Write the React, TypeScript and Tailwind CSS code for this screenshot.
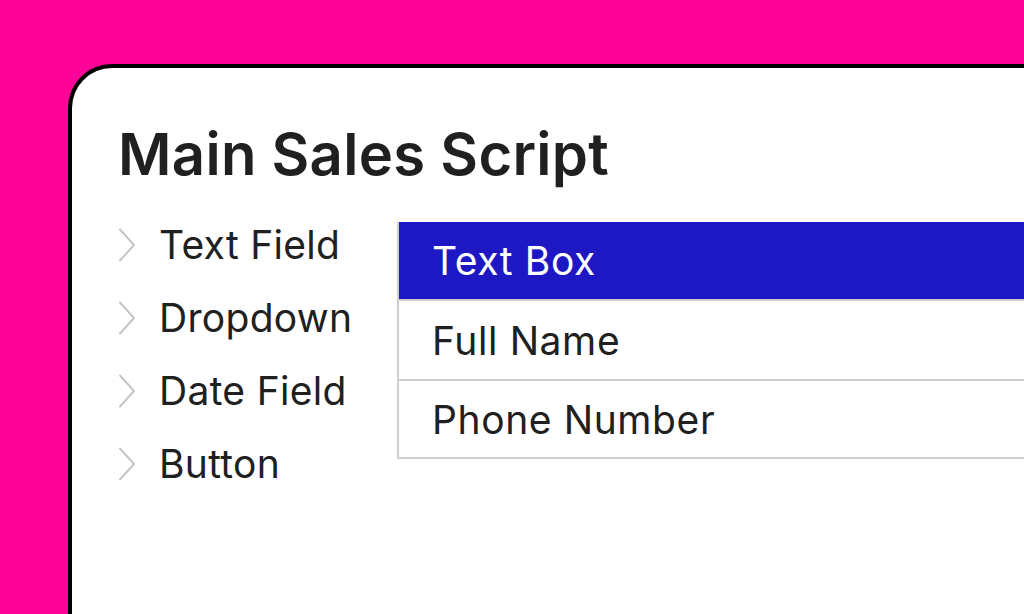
import React from "react";

const fields = ["Text Field", "Dropdown", "Date Field", "Button"];
const rows = ["Text Box", "Full Name", "Phone Number"];

const Chevron = () => (
  <svg width="18" height="34" viewBox="0 0 18 34" fill="none" className="shrink-0">
    <path d="M2 1.5 L16 17 L2 32.5" stroke="#c4c4c4" strokeWidth="1.9" strokeLinecap="round" strokeLinejoin="round" />
  </svg>
);

const App: React.FC = () => {
  return (
    <div
      className="w-[1024px] h-[614px] overflow-hidden bg-[#ff0399] pt-[64px] pl-[68px] flex"
      style={{ fontFamily: "Inter, 'Noto Sans', sans-serif" }}
    >
      {/* Window card, runs off the right and bottom */}
      <div className="flex-1 h-[600px] bg-white border-t-4 border-l-4 border-black rounded-tl-[44px] pl-[46px] pt-[52px] text-[#202020]">
        <h1 className="text-[58px] leading-[68px] font-semibold tracking-[0.3px]">Main Sales Script</h1>

        <div className="flex items-start mt-[20px]">
          {/* Field types */}
          <ul className="w-[279px] shrink-0">
            {fields.map((f) => (
              <li key={f} className="h-[73px] flex items-center gap-[23px]">
                <Chevron />
                <span className="text-[39px] leading-none tracking-[0.3px]">{f}</span>
              </li>
            ))}
          </ul>

          {/* Form rows */}
          <div className="flex-1 mt-[14px] border-l-2 border-b-2 border-[#cfcfcf]">
            {rows.map((r, i) => (
              <div
                key={r}
                className={
                  i === 0
                    ? "h-[79px] flex items-center pl-[33px] bg-[#1e17c4] text-white border-b-2 border-[#cfcfcf]"
                    : i === rows.length - 1
                    ? "h-[76px] flex items-center pl-[33px]"
                    : "h-[80px] flex items-center pl-[33px] border-b-2 border-[#cfcfcf]"
                }
              >
                <span className="text-[39px] leading-none tracking-[0.6px]">{r}</span>
              </div>
            ))}
          </div>
        </div>
      </div>
    </div>
  );
};

export default App;
